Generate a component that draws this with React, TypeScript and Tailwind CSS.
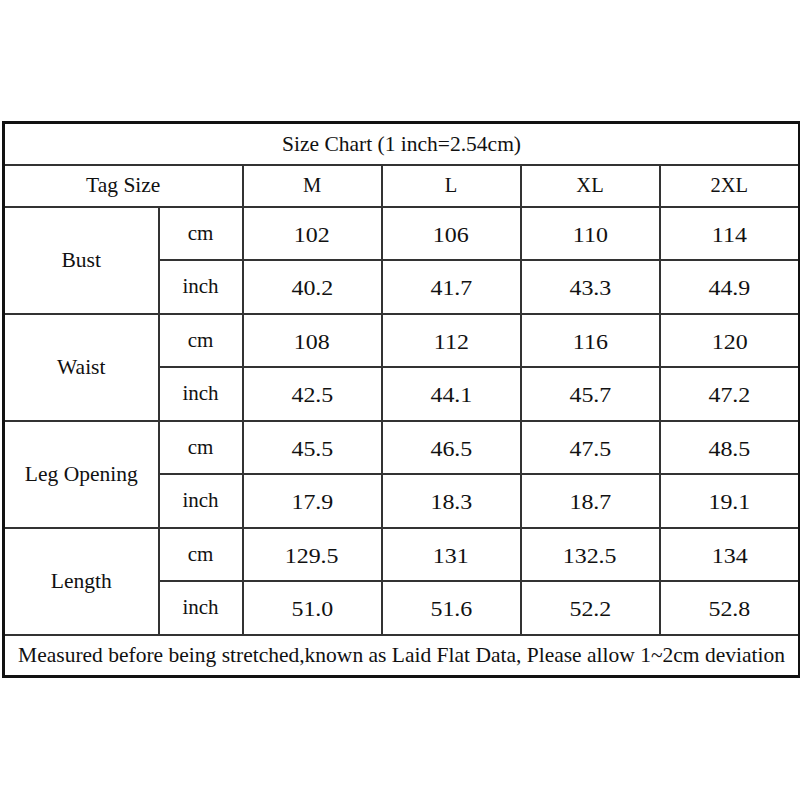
import React from "react";

const sizes = ["M", "L", "XL", "2XL"];

const rows = [
  { label: "Bust", cm: ["102", "106", "110", "114"], inch: ["40.2", "41.7", "43.3", "44.9"] },
  { label: "Waist", cm: ["108", "112", "116", "120"], inch: ["42.5", "44.1", "45.7", "47.2"] },
  { label: "Leg Opening", cm: ["45.5", "46.5", "47.5", "48.5"], inch: ["17.9", "18.3", "18.7", "19.1"] },
  { label: "Length", cm: ["129.5", "131", "132.5", "134"], inch: ["51.0", "51.6", "52.2", "52.8"] },
];

const cell = "border-2 border-[#333] text-center align-middle p-0";

function Num({ v }: { v: string }) {
  return <span className="inline-block text-[21px] scale-x-[1.14] translate-y-[2px]">{v}</span>;
}

export default function App() {
  return (
    <div
      className="w-[800px] h-[800px] bg-white text-[#111] pt-[121px] pl-[2px]"
      style={{ fontFamily: '"Liberation Serif", "Times New Roman", serif' }}
    >
      <table className="border-collapse border-[3px] border-[#111] w-[796px] table-fixed">
        <colgroup>
          <col className="w-[155px]" />
          <col className="w-[84px]" />
          <col className="w-[139px]" />
          <col className="w-[139px]" />
          <col className="w-[139px]" />
          <col className="w-[140px]" />
        </colgroup>
        <tbody>
          <tr className="h-[42px]">
            <td colSpan={6} className={`${cell} text-[21.5px]`}>
              Size Chart (1 inch=2.54cm)
            </td>
          </tr>
          <tr className="h-[42px]">
            <td colSpan={2} className={`${cell} text-[21.5px]`}>
              Tag Size
            </td>
            {sizes.map((s) => (
              <td key={s} className={`${cell} text-[20.5px]`}>
                {s}
              </td>
            ))}
          </tr>
          {rows.map((r) => (
            <React.Fragment key={r.label}>
              <tr className="h-[53.5px]">
                <td rowSpan={2} className={`${cell} text-[21.5px]`}>
                  {r.label}
                </td>
                <td className={`${cell} text-[21px]`}>cm</td>
                {r.cm.map((v, i) => (
                  <td key={i} className={cell}>
                    <Num v={v} />
                  </td>
                ))}
              </tr>
              <tr className="h-[53.5px]">
                <td className={`${cell} text-[21px]`}>inch</td>
                {r.inch.map((v, i) => (
                  <td key={i} className={cell}>
                    <Num v={v} />
                  </td>
                ))}
              </tr>
            </React.Fragment>
          ))}
          <tr className="h-[42px]">
            <td colSpan={6} className={`${cell} text-[21.5px] whitespace-nowrap`}>
              Measured before being stretched,known as Laid Flat Data, Please allow 1~2cm deviation
            </td>
          </tr>
        </tbody>
      </table>
    </div>
  );
}
